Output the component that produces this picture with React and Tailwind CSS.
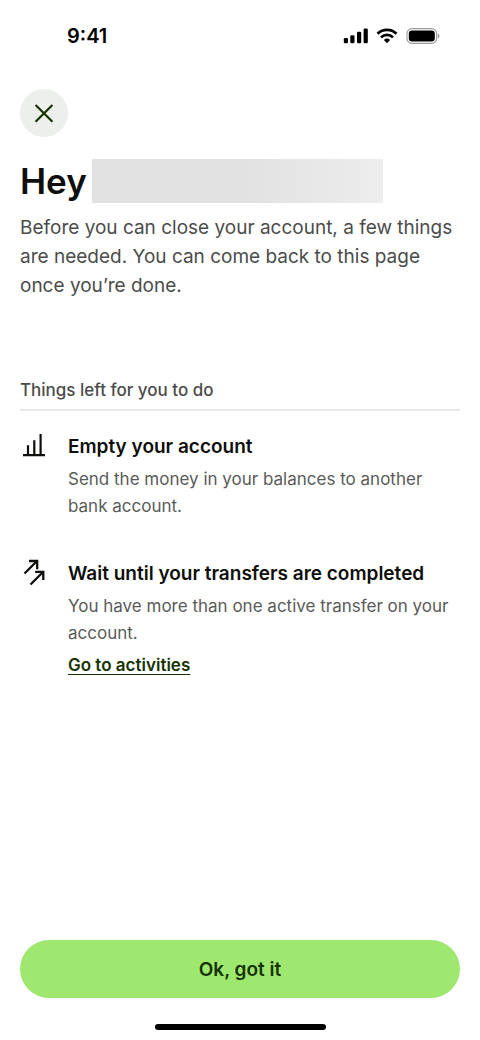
function SignalIcon() {
  return (
    <svg width="25" height="16" viewBox="0 0 25 16" fill="#000" aria-hidden="true">
      <rect x="0.8" y="10" width="4.2" height="5.2" rx="1.3" />
      <rect x="7.300" y="7.300" width="4.2" height="7.9" rx="1.3" />
      <rect x="14" y="3.800" width="4.2" height="11.4" rx="1.3" />
      <rect x="20.600" y="0.500" width="4.2" height="14.7" rx="1.3" />
    </svg>
  );
}

function WifiIcon() {
  return (
    <svg width="22" height="16" viewBox="0 0 22 16" aria-hidden="true">
      <g fill="none" stroke="#000" strokeWidth="2.7">
        <path d="M1.500 5.700a13.600 13.600 0 0 1 19 0" />
        <path d="M5 9.400a8.600 8.600 0 0 1 12 0" />
      </g>
      <path d="M11 15.200 7.900 12a4.600 4.600 0 0 1 6.200 0Z" fill="#000" />
    </svg>
  );
}

function BatteryIcon() {
  return (
    <svg width="34" height="16" viewBox="0 0 34 16" aria-hidden="true">
      <rect x="1" y="0.6" width="29.6" height="14.8" rx="5" fill="none" stroke="#9b9b9b" strokeWidth="1.1" />
      <rect x="2.8" y="2.4" width="26" height="11.2" rx="3.3" fill="#000" />
      <path d="M31.800 5.400v5.200c1-.4 1.700-1.400 1.700-2.600s-.7-2.200-1.700-2.600Z" fill="#9b9b9b" />
    </svg>
  );
}

function CloseIcon() {
  return (
    <svg width="20" height="20" viewBox="0 0 20 20" fill="none" stroke="#163300" strokeWidth="2.2" aria-hidden="true">
      <path d="M1.600 2 18.400 18.800M18.400 2 1.600 18.800" />
    </svg>
  );
}

function BarsIcon() {
  return (
    <svg width="28" height="28" viewBox="0 0 28 28" fill="none" stroke="#0e0f0c" strokeWidth="2.2" aria-hidden="true">
      <path d="M3 23.200H25M8 23V13.300M14.300 23V8.300M20.600 23V2" />
    </svg>
  );
}

function TransfersIcon() {
  return (
    <svg width="28" height="28" viewBox="0 0 28 28" fill="none" stroke="#0e0f0c" strokeWidth="2.3" aria-hidden="true">
      <path d="M4.500 14.500 16.500 2.500M9 2H17.200V10.200M10.500 25.500 22.800 13.200M15.100 12.800H23.300V21" />
    </svg>
  );
}

function Task({ icon, title, text, children }) {
  return (
    <li className="flex gap-5">
      <div className="shrink-0">{icon}</div>
      <div className="min-w-0 flex-1">
        <h3 className="text-[19px] leading-[30px] font-semibold text-[#0e0f0c]">{title}</h3>
        <p className="mt-1 text-[17px] leading-[27px] text-[#5a5b59]">{text}</p>
        {children}
      </div>
    </li>
  );
}

export default function App() {
  return (
    <div className="flex min-h-screen flex-col bg-white font-['Inter',sans-serif]">
      <div className="flex h-[72px] items-center justify-between pr-10 pl-[67px]">
        <span className="text-[20px] leading-7 font-semibold text-black">9:41</span>
        <div className="flex items-center gap-2">
          <SignalIcon />
          <WifiIcon />
          <BatteryIcon />
        </div>
      </div>

      <main className="flex flex-1 flex-col px-5 pt-[17px]">
        <button
          type="button"
          aria-label="Close"
          className="flex size-12 items-center justify-center rounded-full bg-[#edefec]"
        >
          <CloseIcon />
        </button>

        <h1 className="mt-[22px] flex items-center gap-[5px] text-[35px] leading-[44px] font-semibold text-[#0e0f0c]">
          Hey
          <span className="h-11 w-[291px] bg-linear-to-r from-[#e2e2e2] via-[#e1e1e1] to-[#ededed]" />
        </h1>
        <p className="mt-2.5 text-[19px] leading-[29px] text-[#4b4c4a]">
          Before you can close your account, a few things are needed. You can come back to this page once you’re done.
        </p>

        <h2 className="mt-[78px] border-b-2 border-[#e7e8e7] pb-[7px] text-[17px] leading-6 font-medium text-[#4b4c4a]">
          Things left for you to do
        </h2>
        <ul className="mt-[21px] flex flex-col gap-[39px]">
          <Task
            icon={<BarsIcon />}
            title="Empty your account"
            text="Send the money in your balances to another bank account."
          />
          <Task
            icon={<TransfersIcon />}
            title="Wait until your transfers are completed"
            text="You have more than one active transfer on your account."
          >
            <a
              href="#activities"
              className="mt-1.5 inline-block text-[17px] leading-6 font-semibold text-[#163300] underline decoration-1 underline-offset-3"
            >
              Go to activities
            </a>
          </Task>
        </ul>

        <button
          type="button"
          className="mt-auto h-[58px] w-full rounded-full bg-[#9fe870] pt-0.5 text-[19px] leading-7 font-semibold text-[#163300]"
        >
          Ok, got it
        </button>
      </main>

      <div className="mx-auto mt-[26px] mb-2.5 h-1.5 w-[171px] rounded-full bg-black" />
    </div>
  );
}
